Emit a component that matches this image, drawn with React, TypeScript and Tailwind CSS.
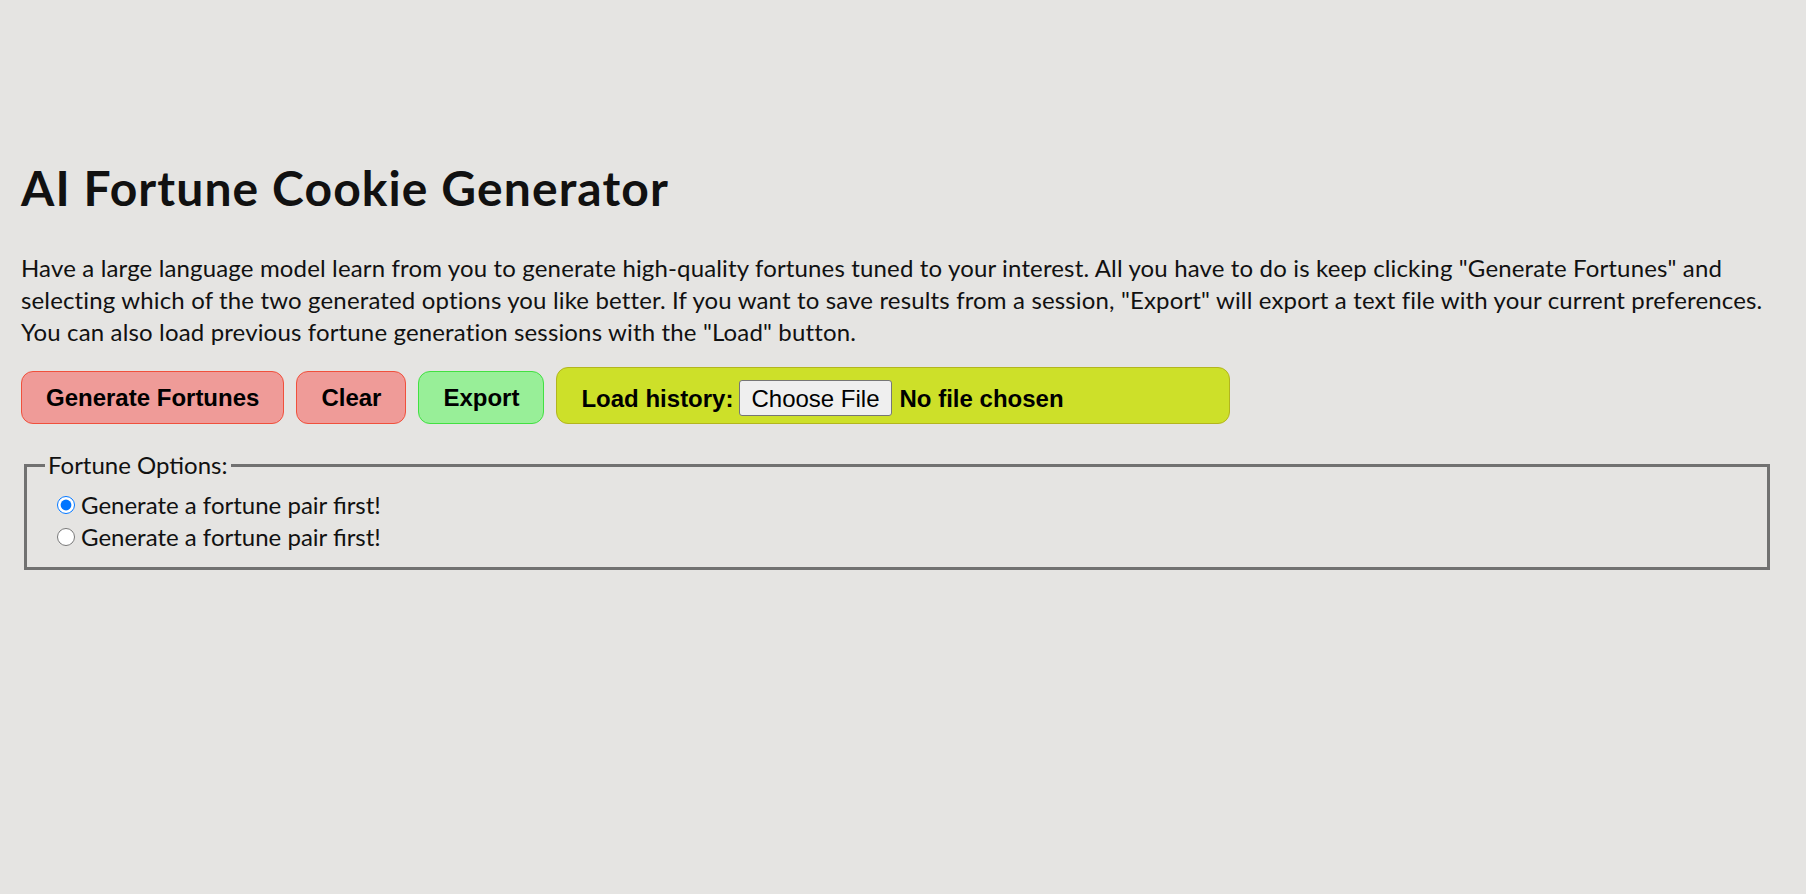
export default function App() {
  return (
    <div className="min-h-screen w-full bg-[#e5e4e2] pl-[21px] pr-[33px] pt-[156px] text-[#111] font-['Lato',sans-serif]">
      {/* Title */}
      <h1 className="text-[48px] font-bold leading-[64px] tracking-[1.1px]">AI Fortune Cookie Generator</h1>

      {/* Intro */}
      <p className="mt-[32px] text-[24px] leading-[32px] tracking-[0.15px]">
        Have a large language model learn from you to generate high-quality fortunes tuned to your interest. All you
        have to do is keep clicking "Generate Fortunes" and selecting which of the two generated options you like
        better. If you want to save results from a session, "Export" will export a text file with your current
        preferences. You can also load previous fortune generation sessions with the "Load" button.
      </p>

      {/* Actions */}
      <div className="mt-[19px] flex items-end gap-[12px] font-['Liberation_Sans',Arial,sans-serif] text-[24px] font-bold text-black">
        <button className="rounded-[12px] border border-[#f0503c] bg-[#ef9b98] px-6 py-3 leading-[27px]">
          Generate Fortunes
        </button>
        <button className="rounded-[12px] border border-[#f0503c] bg-[#ef9b98] px-6 py-3 leading-[27px]">
          Clear
        </button>
        <button className="rounded-[12px] border border-[#42e042] bg-[#98ef98] px-6 py-3 leading-[27px]">
          Export
        </button>
        <label className="flex h-[57px] items-center rounded-[12px] border border-[#b3b51e] bg-[#cde029] px-6 pt-[5px]">
          <span className="mr-[6px] leading-[27px]">Load history:</span>
          <input
            type="file"
            className="w-[466px] text-[24px] font-bold leading-[27px] file:mr-[8px] file:h-[36px] file:rounded-[3px] file:border file:border-solid file:border-[#767676] file:bg-[#efefef] file:px-[11px] file:font-normal file:text-black"
          />
        </label>
      </div>

      {/* Options */}
      <fieldset className="mx-[3px] mt-[25px] border-[3px] border-solid border-[#717171] px-[18px] pt-[8px] pb-[14px] text-[24px] leading-[32px]">
        <legend className="px-[3px]">Fortune Options:</legend>
        <label className="flex items-center">
          <input type="radio" name="fortune" defaultChecked className="ml-[12px] mr-[6px] h-[18px] w-[18px]" />
          Generate a fortune pair first!
        </label>
        <label className="flex items-center">
          <input type="radio" name="fortune" className="ml-[12px] mr-[6px] h-[18px] w-[18px]" />
          Generate a fortune pair first!
        </label>
      </fieldset>
    </div>
  );
}
